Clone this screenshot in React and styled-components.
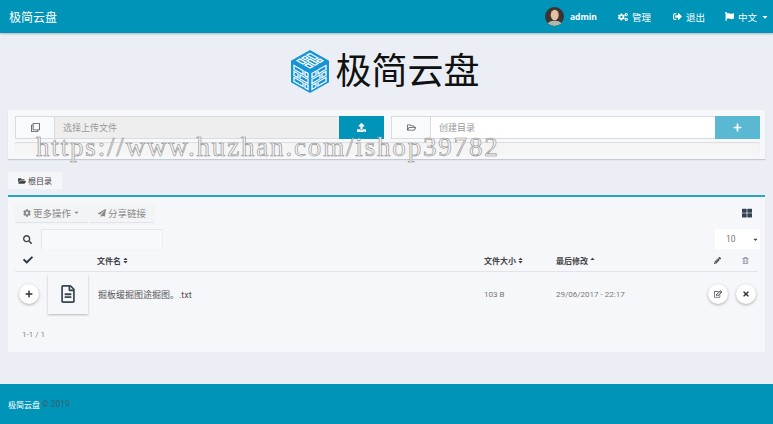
import styled, { createGlobalStyle } from "styled-components";
import {
  FaCogs, FaSignOutAlt, FaFlag, FaUpload, FaPlus, FaRegFolderOpen, FaRegClone, FaFolderOpen,
  FaCog, FaPaperPlane, FaSearch, FaCheck, FaPencilAlt, FaRegTrashAlt, FaRegEdit, FaTimes,
  FaThLarge, FaRegFileAlt, FaSort, FaSortUp, FaCaretDown,
} from "react-icons/fa";

const GlobalStyle = createGlobalStyle`
  html, body { margin: 0; padding: 0; background: #ebeef4; }
  body {
    font-family: Roboto, "Noto Sans CJK SC", sans-serif;
    font-size: 9px;
    color: #555;
    overflow: hidden;
  }
`;

const Page = styled.div`
  position: relative;
  width: 773px;
  height: 424px;
  display: flex;
  flex-direction: column;
  overflow: hidden;
`;

const Navbar = styled.header`
  height: 33px;
  flex: none;
  background: #0094b8;
  box-shadow: 0 1px 2px rgba(0, 0, 0, 0.25);
  display: flex;
  align-items: center;
  padding: 0 4px 0 9px;
  color: #fff;
`;

const Brand = styled.div`
  font-size: 12px;
  flex: 1;
`;

const NavItem = styled.div`
  display: flex;
  align-items: center;
  gap: 4px;
  font-size: ${(p) => p.$size || 9.5}px;
  font-weight: ${(p) => (p.$bold ? 700 : 400)};
  margin-left: ${(p) => p.$gap || 0}px;
  font-family: ${(p) => (p.$bold ? '"Open Sans", sans-serif' : "inherit")};
`;

const Avatar = styled.svg`
  width: 19px;
  height: 19px;
  margin-right: 6px;
  border-radius: 50%;
`;

const LogoRow = styled.div`
  height: 77px;
  flex: none;
  display: flex;
  align-items: center;
  justify-content: center;
  gap: 5px;
  color: #111;
  font-size: 36px;
  line-height: 1;
  padding-right: 3px;
`;

const UploadCard = styled.section`
  margin: 0 8px;
  height: 49px;
  flex: none;
  box-sizing: border-box;
  background: #f7f8fb;
  box-shadow: 0 1px 1px rgba(0, 0, 0, 0.15);
  padding: 6px 5px 0 7px;
  display: flex;
  flex-direction: column;
  gap: 3px;
`;

const InputRow = styled.div`
  display: flex;
  gap: 7px;
  height: 23px;
`;

const InputGroup = styled.div`
  flex: 1;
  display: flex;
  border: 1px solid #d9dbde;
  border-right: 0;
  box-sizing: border-box;
  height: 23px;
`;

const Addon = styled.div`
  width: 38px;
  flex: none;
  display: flex;
  align-items: center;
  justify-content: center;
  background: #f9fafc;
  border-right: 1px solid #d9dbde;
  color: #555;
  font-size: 9px;
`;

const FakeInput = styled.div`
  flex: 1;
  background: ${(p) => (p.$disabled ? "#eeeeee" : "#fff")};
  color: #999;
  font-size: 9px;
  display: flex;
  align-items: center;
  padding-left: 8px;
`;

const ActionButton = styled.div`
  width: ${(p) => p.$w}px;
  flex: none;
  margin: -1px 0;
  background: ${(p) => p.$bg};
  color: #fff;
  display: flex;
  align-items: center;
  justify-content: center;
  font-size: 9px;
`;

const Progress = styled.div`
  height: 13px;
  background: #f5f5f5;
  border-radius: 2px;
  box-shadow: inset 0 1px 1px rgba(0, 0, 0, 0.1);
`;

const Watermark = styled.div`
  position: absolute;
  left: 36px;
  top: 132px;
  font-family: "Liberation Serif", serif;
  font-size: 27px;
  line-height: 30px;
  letter-spacing: 1.83px;
  white-space: nowrap;
  color: #f6f6f6;
  -webkit-text-stroke: 0.6px #8c8c8c;
  opacity: 0.99;
  pointer-events: none;
`;

const Tab = styled.div`
  margin: 13px 0 0 8px;
  width: 54px;
  height: 17px;
  flex: none;
  background: #f4f6f9;
  color: #444;
  display: flex;
  align-items: center;
  justify-content: center;
  gap: 2px;
  font-size: 8px;
`;

const Panel = styled.section`
  margin: 6px 8px 0;
  height: 157px;
  flex: none;
  box-sizing: border-box;
  background: #f6f7fa;
  border-top: 2px solid #2ba3c4;
  padding: 6px 7px 0;
`;

const Toolbar = styled.div`
  display: flex;
  align-items: center;
  gap: 2px;
  height: 19px;
`;

const GhostButton = styled.div`
  height: 18px;
  padding: 0 8px;
  display: flex;
  align-items: center;
  gap: 2px;
  background: #f3f4f6;
  box-shadow: 0 1px 1px rgba(0, 0, 0, 0.08);
  color: #888;
  font-size: 9.5px;
`;

const ViewToggle = styled.div`
  margin-left: auto;
  margin-right: 6px;
  color: #33434f;
  font-size: 10px;
  display: flex;
`;

const SearchRow = styled.div`
  display: flex;
  align-items: center;
  height: 20px;
  margin-top: 7px;
`;

const SearchIcon = styled.div`
  width: 26px;
  padding-left: 8px;
  box-sizing: border-box;
  color: #444;
  font-size: 9px;
  display: flex;
`;

const SearchInput = styled.div`
  width: 122px;
  height: 20px;
  box-sizing: border-box;
  border-top: 1px solid #e4e6e9;
  border-left: 1px solid #e4e6e9;
  border-right: 1px solid #eceef0;
  background: #f8f9fb;
`;

const PageSize = styled.div`
  margin-left: auto;
  margin-right: -2px;
  width: 45px;
  height: 20px;
  background: #fff;
  color: #777;
  display: flex;
  align-items: center;
  justify-content: space-between;
  padding: 0 1px 0 11px;
  box-sizing: border-box;
  font-size: 8.5px;
`;

const tableColumns = "33px 49px 387px 72px 1fr 27px 19px";

const HeadRow = styled.div`
  display: grid;
  grid-template-columns: ${tableColumns};
  align-items: center;
  height: 22px;
  border-bottom: 1px solid #e2e4e8;
  color: #444;
  font-size: 8px;
  font-weight: 700;
`;

const HeadCell = styled.div`
  display: flex;
  align-items: center;
  gap: 1px;
  grid-column: ${(p) => p.$col};
  color: ${(p) => p.$color || "inherit"};
  padding-left: ${(p) => p.$pad || 0}px;
`;

const FileRow = styled.div`
  display: grid;
  grid-template-columns: ${tableColumns};
  align-items: center;
  height: 44px;
  font-size: 8px;
  color: #777;
`;

const RoundButton = styled.div`
  width: 20px;
  height: 20px;
  border-radius: 50%;
  background: #fff;
  box-shadow: 0 1px 3px rgba(0, 0, 0, 0.3);
  color: #333;
  display: flex;
  align-items: center;
  justify-content: center;
  font-size: 8px;
  margin-left: ${(p) => p.$ml || 0}px;
`;

const Thumb = styled.div`
  width: 40px;
  height: 40px;
  background: #f6f7fa;
  box-shadow: 0 1px 2px rgba(0, 0, 0, 0.25);
  display: flex;
  align-items: center;
  justify-content: center;
  color: #37474f;
  font-size: 18px;
`;

const FileName = styled.div`
  color: #555;
  font-size: 9px;
  margin-left: 1px;
`;

const Actions = styled.div`
  grid-column: 6 / 8;
  display: flex;
  gap: 8px;
  margin-left: -4px;
`;

const Pagination = styled.div`
  color: #888;
  font-size: 8px;
  margin: 14px 0 0 7px;
`;

const Footer = styled.footer`
  margin-top: 32px;
  flex: 1;
  background: #0094b8;
  display: flex;
  align-items: center;
  padding-left: 8px;
  color: #39606e;
  font-size: 8.5px;
  gap: 2px;
  b { color: #fff; font-weight: 400; font-size: 8px; }
`;

function CubeLogo() {
  return (
    <svg width="40" height="43" viewBox="0 0 40 43">
      <path d="M20 0 39 10.7V32.3L20 43 1 32.3V10.7Z" fill="#1594d8" />
      <g fill="none" stroke="#fff" strokeWidth="1.3">
        <g transform="matrix(1 .568 1 -.563 1 10.7)">
          <path d="M3 3h6v3H3ZM11 3h5v3h-5ZM3 8h3v3H3ZM8 8h8v3H8ZM3 13h8v3H3ZM13 13h3v3h-3Z" />
        </g>
        <g transform="matrix(1 .568 0 1 1 10.7)">
          <path d="M3 3h9v4H3ZM14 3h3v4h-3ZM3 9h4v4H3ZM9 9h8v4H9ZM3 15h9v4H3ZM14 15h3v4h-3Z" />
        </g>
        <g transform="matrix(1 -.568 0 1 20 21.5)">
          <path d="M2 3h4v4H2ZM8 3h8v4H8ZM2 9h8v4H2ZM12 9h4v4h-4ZM2 15h4v4H2ZM8 15h8v4H8Z" />
        </g>
      </g>
    </svg>
  );
}

function UserFace() {
  return (
    <Avatar viewBox="0 0 19 19">
      <rect width="19" height="19" fill="#3a3533" />
      <ellipse cx="9.7" cy="8" rx="4" ry="5.2" fill="#e6bfa2" />
      <path d="M2 19c.5-4 4-5.2 7.5-5.2S17 15 17.5 19Z" fill="#b5b5ae" />
    </Avatar>
  );
}

export default function App() {
  return (
    <Page>
      <GlobalStyle />
      <Navbar>
        <Brand>极简云盘</Brand>
        <UserFace />
        <NavItem $bold $size={8.5}>admin</NavItem>
        <NavItem $gap={21}><FaCogs size={10} />管理</NavItem>
        <NavItem $gap={22}><FaSignOutAlt size={9} />退出</NavItem>
        <NavItem $gap={20}><FaFlag size={9} />中文 <FaCaretDown size={8} /></NavItem>
      </Navbar>

      <LogoRow>
        <CubeLogo />
        极简云盘
      </LogoRow>

      <UploadCard>
        <InputRow>
          <InputGroup>
            <Addon><FaRegClone /></Addon>
            <FakeInput $disabled>选择上传文件</FakeInput>
            <ActionButton $w={45} $bg="#0094b8"><FaUpload /></ActionButton>
          </InputGroup>
          <InputGroup>
            <Addon><FaRegFolderOpen /></Addon>
            <FakeInput>创建目录</FakeInput>
            <ActionButton $w={45} $bg="#5bb8d2"><FaPlus /></ActionButton>
          </InputGroup>
        </InputRow>
        <Progress />
      </UploadCard>

      <Tab><FaFolderOpen size={8} />根目录</Tab>

      <Panel>
        <Toolbar>
          <GhostButton><FaCog size={8} /> 更多操作 <FaCaretDown size={7} /></GhostButton>
          <GhostButton><FaPaperPlane size={8} /> 分享链接</GhostButton>
          <ViewToggle><FaThLarge /></ViewToggle>
        </Toolbar>
        <SearchRow>
          <SearchIcon><FaSearch /></SearchIcon>
          <SearchInput />
          <PageSize>10<FaCaretDown size={7} color="#444" /></PageSize>
        </SearchRow>
        <HeadRow>
          <HeadCell $col={1} $pad={8} $color="#2d3a42"><FaCheck size={10} /></HeadCell>
          <HeadCell $col={3}>文件名<FaSort size={7} /></HeadCell>
          <HeadCell $col={4}>文件大小<FaSort size={7} /></HeadCell>
          <HeadCell $col={5}>最后修改<FaSortUp size={7} /></HeadCell>
          <HeadCell $col={6} $pad={2}><FaPencilAlt size={7} /></HeadCell>
          <HeadCell $col={7} $pad={3} $color="#889"><FaRegTrashAlt size={7} /></HeadCell>
        </HeadRow>
        <FileRow>
          <RoundButton $ml={4}><FaPlus /></RoundButton>
          <Thumb><FaRegFileAlt /></Thumb>
          <FileName>掘板缓掘图途掘图。.txt</FileName>
          <div>103 B</div>
          <div>29/06/2017 - 22:17</div>
          <Actions>
            <RoundButton><FaRegEdit /></RoundButton>
            <RoundButton><FaTimes /></RoundButton>
          </Actions>
        </FileRow>
        <Pagination>1-1 / 1</Pagination>
      </Panel>

      <Footer><b>极简云盘</b> © 2019</Footer>

      <Watermark>https://www.huzhan.com/ishop39782</Watermark>
    </Page>
  );
}
